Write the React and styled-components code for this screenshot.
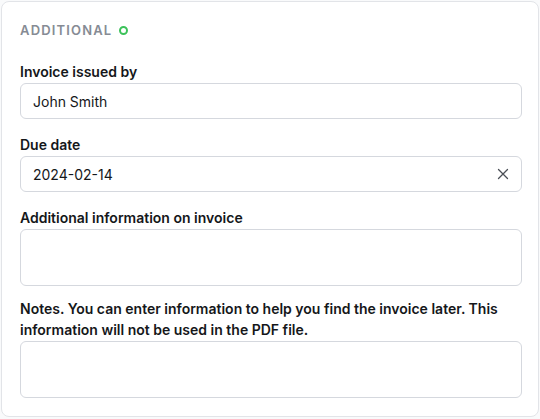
import { createGlobalStyle, styled } from "styled-components";

const GlobalStyle = createGlobalStyle`
  body {
    margin: 0;
    background: #f9fafb;
    font-family: Inter, "Noto Sans", sans-serif;
  }
`;

const Card = styled.section`
  margin: 1px;
  width: 538px;
  height: 416px;
  box-sizing: border-box;
  background: #fff;
  border: 1px solid #e2e4e8;
  border-radius: 8px;
  padding: 19px 16px 0 18px;
  display: flex;
  flex-direction: column;
`;
const Title = styled.h2`
  margin: 0 0 22px 0;
  display: flex;
  align-items: center;
  gap: 7px;
  font-size: 13px;
  line-height: 18px;
  font-weight: 600;
  letter-spacing: 0.09em;
  color: #868b94;
`;
const Dot = styled.span`
  width: 5px;
  height: 5px;
  border: 2px solid #3cc25a;
  border-radius: 50%;
`;
const Field = styled.div`
  display: flex;
  flex-direction: column;
  margin-bottom: ${(p) => p.$gap ?? 15}px;
`;
const Label = styled.label`
  font-size: 14px;
  line-height: 21px;
  font-weight: 600;
  color: #15171a;
  margin-bottom: 1px;
`;
const InputWrap = styled.div`
  position: relative;
  display: flex;
  align-items: center;
`;
const Input = styled.input`
  width: 100%;
  height: 36px;
  box-sizing: border-box;
  border: 1px solid #d5d8de;
  border-radius: 6px;
  padding: 0 12px;
  font-family: inherit;
  font-size: 14px;
  color: #15171a;
  outline: none;
`;
const Clear = styled.button`
  position: absolute;
  right: 13px;
  border: none;
  background: none;
  padding: 0;
  display: flex;
  color: #4b4f56;
`;
const Textarea = styled.textarea`
  display: block;
  width: 100%;
  height: ${(p) => p.$h}px;
  box-sizing: border-box;
  border: 1px solid #d5d8de;
  border-radius: 6px;
  padding: 8px 12px;
  resize: none;
  font-family: inherit;
  font-size: 14px;
  outline: none;
`;

function App() {
  return (
    <>
      <GlobalStyle />
      <Card>
        <Title>
          ADDITIONAL <Dot />
        </Title>
        <Field>
          <Label>Invoice issued by</Label>
          <Input type="text" defaultValue="John Smith" />
        </Field>
        <Field>
          <Label>Due date</Label>
          <InputWrap>
            <Input type="text" defaultValue="2024-02-14" />
            <Clear>
              <svg width="12" height="12" viewBox="0 0 12 12">
                <path d="M1.5 1.5L10.5 10.5M10.5 1.5L1.5 10.5" stroke="currentColor" strokeWidth="1.3" strokeLinecap="round" />
              </svg>
            </Clear>
          </InputWrap>
        </Field>
        <Field $gap={12}>
          <Label>Additional information on invoice</Label>
          <Textarea $h={57} />
        </Field>
        <Field>
          <Label>
            Notes. You can enter information to help you find the invoice later. This information will not be used in the PDF file.
          </Label>
          <Textarea $h={57} />
        </Field>
      </Card>
    </>
  );
}

export default App;
